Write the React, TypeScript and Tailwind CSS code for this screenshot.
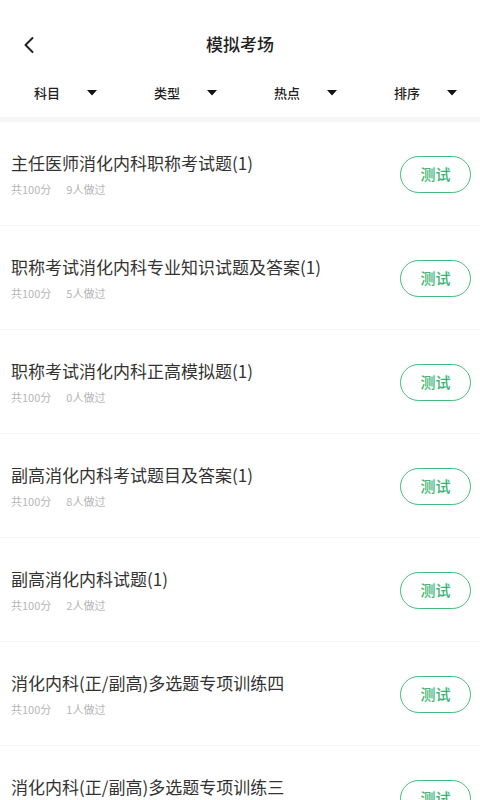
import React from "react";

const items = [
  { title: "主任医师消化内科职称考试题(1)", count: 9 },
  { title: "职称考试消化内科专业知识试题及答案(1)", count: 5 },
  { title: "职称考试消化内科正高模拟题(1)", count: 0 },
  { title: "副高消化内科考试题目及答案(1)", count: 8 },
  { title: "副高消化内科试题(1)", count: 2 },
  { title: "消化内科(正/副高)多选题专项训练四", count: 1 },
  { title: "消化内科(正/副高)多选题专项训练三", count: 1 },
];

const filters = ["科目", "类型", "热点", "排序"];

export default function App() {
  return (
    <div
      className="w-[480px] h-[800px] overflow-hidden bg-white text-[#333]"
      style={{ fontFamily: '"Noto Sans CJK SC", "Noto Sans", sans-serif' }}
    >
      <div className="pt-5">
        <div className="relative h-12 flex items-center justify-center">
          <svg
            className="absolute left-[22px] top-[16px]"
            width="14"
            height="18"
            viewBox="0 0 14 18"
            fill="none"
          >
            <polyline
              points="10.5,2 3.5,9 10.5,16"
              stroke="#222"
              strokeWidth="2"
              strokeLinecap="round"
              strokeLinejoin="round"
            />
          </svg>
          <span className="text-[17px] font-medium text-[#222] leading-6">模拟考场</span>
        </div>
      </div>
      <div className="grid grid-cols-4 h-[49px]">
        {filters.map((f) => (
          <div key={f} className="flex items-center pl-[34px]">
            <span className="text-[13px] font-medium text-[#222] w-[26px] leading-4 whitespace-nowrap">
              {f}
            </span>
            <svg className="ml-[27px]" width="10" height="6" viewBox="0 0 10 6">
              <polygon points="0,0 10,0 5,5.5" fill="#111" />
            </svg>
          </div>
        ))}
      </div>
      <div className="h-[5px] bg-[#f6f6f6]" />
      <div>
        {items.map((it, i) => (
          <div key={i} className="border-b border-[#f4f4f4]">
            <div className="h-[103px] flex items-center justify-between pl-[11px] pr-[9px]">
              <div className="flex flex-col">
                <span className="text-[17px] leading-6 text-[#333] whitespace-nowrap">{it.title}</span>
                <div className="mt-[6px] flex text-[11px] leading-4 text-[#b5b5b5]">
                  <span>共100分</span>
                  <span className="ml-[15px]">{it.count}人做过</span>
                </div>
              </div>
              <div className="w-[71px] h-[37px] rounded-full border-[1.5px] border-[#46bb7c] flex items-center justify-center text-[15px] font-medium text-[#3cb574] mt-[1px]">
                测试
              </div>
            </div>
          </div>
        ))}
      </div>
    </div>
  );
}
